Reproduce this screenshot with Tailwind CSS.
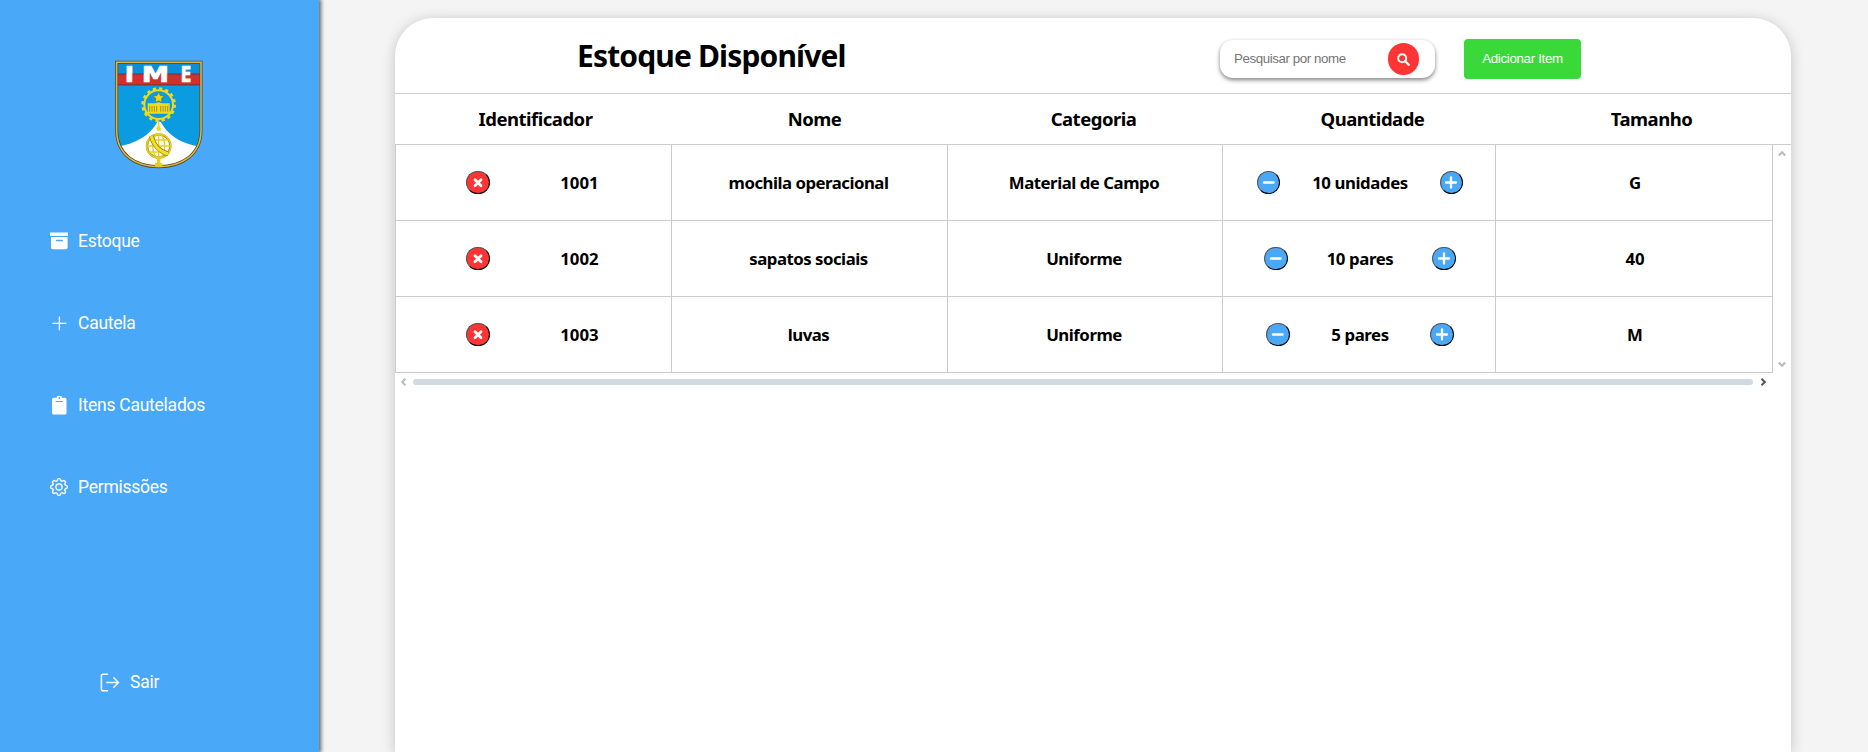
<!DOCTYPE html>
<html lang="pt-BR">
<head>
<meta charset="utf-8">
<title>Estoque</title>
<script src="https://cdn.jsdelivr.net/npm/@tailwindcss/browser@4"></script>
</head>
<body class="flex h-[752px] overflow-hidden bg-[#f4f4f4] font-['Noto_Sans',sans-serif] text-black">
<svg class="hidden">
  <symbol id="x" viewBox="0 0 24 24"><path d="M9 8.800l6 6M15 8.800l-6 6" stroke="#fff" stroke-width="2.800" stroke-linecap="round"/></symbol>
  <symbol id="minus" viewBox="0 0 24 24"><path d="M7 11.500h9.500" stroke="#fff" stroke-width="2.400" stroke-linecap="round"/></symbol>
  <symbol id="plus" viewBox="0 0 24 24"><path d="M7 11.500h10M12 6.500v10" stroke="#fff" stroke-width="2.300" stroke-linecap="round"/></symbol>
</svg>

<aside class="flex w-[319px] shrink-0 flex-col bg-[#4aa8f9] font-[Roboto,sans-serif] text-[17.500px] tracking-[-0.25px] text-white shadow-[1px_0_4px_1px_rgba(0,0,0,0.6)]">
  <svg class="mt-[50px] ml-[100px] h-[130px] w-[120px]" viewBox="0 0 360 390">
    <defs><clipPath id="shield"><path d="M50 37H303V240C303 315 245 350 176 350C107 350 50 315 50 240Z"/></clipPath></defs>
    <g clip-path="url(#shield)">
      <rect x="45" y="30" width="265" height="325" fill="#0b9be0"/>
      <rect x="45" y="30" width="265" height="43" fill="#0b8fd6"/>
      <rect x="45" y="72" width="265" height="33" fill="#d22f2f"/>
      <path d="M45 72H310M45 105H310" stroke="#333" stroke-width="2"/>
      <path d="M45 290C105 285 150 255 172 216H182C204 255 245 285 308 290V360H45Z" fill="#fff"/>
    </g>
    <path d="M50 37H303V240C303 315 245 350 176 350C107 350 50 315 50 240Z" fill="none" stroke="#514a25" stroke-width="9"/>
    <path d="M50 37H303V240C303 315 245 350 176 350C107 350 50 315 50 240Z" fill="none" stroke="#e2b53c" stroke-width="4.500"/>
    <g fill="#fff" stroke="#fff" stroke-width="2" letter-spacing="0" font-family="DejaVu Sans" font-weight="700" font-size="61">
      <text x="74" y="96" textLength="28" lengthAdjust="spacingAndGlyphs">I</text>
      <text x="125" y="96" textLength="82" lengthAdjust="spacingAndGlyphs">M</text>
      <text x="242" y="96" textLength="32" lengthAdjust="spacingAndGlyphs">E</text>
    </g>
    <g stroke="#f0d91c" fill="none">
      <circle cx="176" cy="164" r="43" stroke-width="6"/>
      <circle cx="176" cy="164" r="48" stroke-width="8" stroke-dasharray="9.500 9.350"/>
      <path d="M176 212v30" stroke-width="5"/>
      <circle cx="176" cy="236" r="5" stroke-width="4" fill="#f0d91c"/>
    </g>
    <path d="M176 127l5 10 11 1-8 8 2 11-10-5-10 5 2-11-8-8 11-1z" fill="#f0d91c" stroke="#6b6a20" stroke-width="1.500"/>
    <path d="M143 160h22l11-3 11 3h22v26h9v5h-84v-5h9z" fill="#f0d91c"/>
    <path d="M149 168v17M156 168v17M163 168v17M170 168v17M182 168v17M189 168v17M196 168v17M203 168v17" stroke="#7d7a1c" stroke-width="2"/>
    <circle cx="176" cy="288" r="35" stroke="#a8930f" stroke-width="7" fill="none"/>
    <g stroke="#e8cf1c" stroke-width="4" fill="none">
      <circle cx="176" cy="288" r="36"/><ellipse cx="176" cy="288" rx="18" ry="36"/>
      <path d="M176 252v84M140 288h72M146 270h60M146 306h60"/>
    </g>
    <path d="M154 258C160 285 180 305 205 312" stroke="#8e7d12" stroke-width="14" fill="none"/>
    <path d="M154 258C160 285 180 305 205 312" stroke="#f4df22" stroke-width="10" fill="none"/>
    <path d="M171 324h10v15h6v11h-22v-11h6z" fill="#e8cf1c"/>
  </svg>

  <nav class="mt-[20px] flex flex-col">
    <a class="flex h-[82px] items-center gap-[10px] pl-[50px]"><svg class="size-[18px]" viewBox="0 0 18 18" fill="#fff"><path d="M0 .5h18v3.400H0z"/><path fill-rule="evenodd" d="M1 4.900h16.600v10.600q0 1.800-1.800 1.800H2.800Q1 17.300 1 15.500zM6.600 7.800a.700.700 0 0 0 0 1.500h5.800a.700.700 0 0 0 0-1.500z"/></svg><span class="pt-px">Estoque</span></a>
    <a class="flex h-[82px] items-center gap-[10px] pl-[50px]"><svg class="size-[18px]" viewBox="0 0 18 18" stroke="#fff" stroke-width="1.300" stroke-linecap="round"><path d="M9.400 2.800v13M2.900 9.400h13"/></svg><span class="pt-px">Cautela</span></a>
    <a class="flex h-[82px] items-center gap-[10px] pl-[50px]"><svg class="h-[19px] w-[18px]" viewBox="0 0 18 19" fill="#fff"><path fill-rule="evenodd" d="M3.700 1.700h3.100a2.500 2.500 0 0 1 5 0h3.100q1.600 0 1.600 1.600v13.600q0 1.600-1.600 1.600H3.700q-1.600 0-1.600-1.600V3.300q0-1.600 1.600-1.600zM9.300 1.200a.8.8 0 1 0 .01 0zM5.700 4.900v1.100h7.200V4.900z"/></svg><span class="pt-px">Itens Cautelados</span></a>
    <a class="flex h-[82px] items-center gap-[10px] pl-[50px]"><svg class="size-[18px]" viewBox="0 0 16 16" fill="#fff" stroke="#fff" stroke-width=".25"><path d="M8 4.754a3.246 3.246 0 1 0 0 6.492 3.246 3.246 0 0 0 0-6.492M5.754 8a2.246 2.246 0 1 1 4.492 0 2.246 2.246 0 0 1-4.492 0"/><path d="M9.796 1.343c-.527-1.790-3.065-1.790-3.592 0l-.094.319a.873.873 0 0 1-1.255.52l-.292-.16c-1.640-.892-3.433.902-2.540 2.541l.159.292a.873.873 0 0 1-.52 1.255l-.319.094c-1.790.527-1.790 3.065 0 3.592l.319.094a.873.873 0 0 1 .52 1.255l-.16.292c-.892 1.640.901 3.434 2.541 2.540l.292-.159a.873.873 0 0 1 1.255.52l.094.319c.527 1.790 3.065 1.790 3.592 0l.094-.319a.873.873 0 0 1 1.255-.52l.292.16c1.640.893 3.434-.902 2.540-2.541l-.159-.292a.873.873 0 0 1 .52-1.255l.319-.094c1.790-.527 1.790-3.065 0-3.592l-.319-.094a.873.873 0 0 1-.52-1.255l.16-.292c.893-1.640-.902-3.433-2.541-2.540l-.292.159a.873.873 0 0 1-1.255-.52zm-2.633.283c.246-.835 1.428-.835 1.674 0l.094.319a1.873 1.873 0 0 0 2.693 1.115l.291-.16c.764-.415 1.600.42 1.184 1.185l-.159.292a1.873 1.873 0 0 0 1.116 2.692l.318.094c.835.246.835 1.428 0 1.674l-.319.094a1.873 1.873 0 0 0-1.115 2.693l.16.291c.415.764-.42 1.600-1.185 1.184l-.291-.159a1.873 1.873 0 0 0-2.693 1.116l-.094.318c-.246.835-1.428.835-1.674 0l-.094-.319a1.873 1.873 0 0 0-2.692-1.115l-.292.16c-.764.415-1.600-.42-1.184-1.185l.159-.291A1.873 1.873 0 0 0 1.945 8.930l-.319-.094c-.835-.246-.835-1.428 0-1.674l.319-.094A1.873 1.873 0 0 0 3.060 4.377l-.16-.292c-.415-.764.42-1.600 1.185-1.184l.292.159a1.873 1.873 0 0 0 2.692-1.115z"/></svg><span class="pt-px">Permissões</span></a>
  </nav>
  <a class="mt-[113px] flex h-[82px] items-center gap-[10px] pl-[100px]"><svg class="h-[19px] w-[20px]" viewBox="0 0 20 19" fill="none" stroke="#fff" stroke-width="1.500" stroke-linecap="round" stroke-linejoin="round"><path d="M7.500 1.300H3.200Q1.400 1.300 1.400 3.100v12.800q0 1.800 1.800 1.800h4.300M6.800 9.500h11.600M13.800 4.800l4.700 4.700-4.700 4.700"/></svg><span class="pt-px">Sair</span></a>
</aside>

<main class="mt-[18px] ml-[76px] flex h-[734px] w-[1396px] flex-col rounded-t-[38px] bg-white shadow-[0_2px_14px_rgba(0,0,0,0.2)]">
  <header class="flex h-[76px] shrink-0 items-start border-b border-[#ccc]">
    <h1 class="mt-[18px] ml-[182px] w-[269px] text-[30px] leading-[40px] font-bold tracking-[-0.85px] whitespace-nowrap">Estoque Disponível</h1>
    <div class="mt-[22px] ml-[374px] flex h-[38px] w-[215px] items-center rounded-[13px] bg-white pl-[14px] font-['Liberation_Sans',sans-serif] text-[13.333px] tracking-[-0.42px] text-[#757575] shadow-[0_2px_4px_0_rgba(0,0,0,0.5)]">
      <span class="w-[154px]">Pesquisar por nome</span>
      <span class="flex h-8 w-[31px] items-center justify-center rounded-full bg-[#ff3434]"><svg class="size-[13px]" viewBox="0 0 13 13" fill="none" stroke="#fff"><circle cx="5.200" cy="5.200" r="4" stroke-width="2"/><path d="M8.300 8.300l3.400 3.400" stroke-width="2.300" stroke-linecap="round"/></svg></span>
    </div>
    <button class="mt-[21px] ml-[29px] h-10 w-[117px] rounded-[4px] bg-[#3ad93a] font-['Liberation_Sans',sans-serif] text-[13.333px] tracking-[-0.32px] text-white">Adicionar Item</button>
  </header>
  <div class="grid h-[50px] shrink-0 grid-cols-5 items-center pl-px text-center text-[18.500px] font-bold tracking-[-0.5px]">
    <div>Identificador</div><div>Nome</div><div>Categoria</div><div>Quantidade</div><div>Tamanho</div>
  </div>
  <div class="flex h-[229px] shrink-0 border-t border-[#ccc]">
    <div class="grid w-[1378px] grid-cols-[276px_276px_275px_273px_277px] grid-rows-[76px_76px_76px] border-l border-[#ccc] text-[16.800px] font-bold" id="rows"></div>
    <div class="flex flex-1 flex-col items-center justify-between pr-px pt-[5px] pb-[5px]">
      <svg class="h-[7px] w-[8px]" viewBox="0 0 8 7"><path d="M.8 5.500L4 2.200l3.200 3.300" fill="none" stroke="#bbb" stroke-width="2"/></svg>
      <svg class="h-[7px] w-[8px]" viewBox="0 0 8 7"><path d="M.8 1.500L4 4.800l3.200-3.300" fill="none" stroke="#bbb" stroke-width="2"/></svg>
    </div>
  </div>
  <div class="flex h-[18px] shrink-0 items-center pl-[5px]">
    <svg class="h-2 w-[7px]" viewBox="0 0 7 8"><path d="M5.500.8L2.200 4l3.300 3.200" fill="none" stroke="#bbb" stroke-width="2"/></svg>
    <div class="ml-[6px] h-[6px] w-[1340px] rounded-full bg-[#cfdae2]"></div>
    <svg class="ml-[7px] h-2 w-[7px]" viewBox="0 0 7 8"><path d="M1.500.8L4.800 4 1.500 7.200" fill="none" stroke="#555" stroke-width="2"/></svg>
  </div>
</main>

<script>
const items = [
  ['1001', 'mochila operacional', 'Material de Campo', '10 unidades', 'G'],
  ['1002', 'sapatos sociais', 'Uniforme', '10 pares', '40'],
  ['1003', 'luvas', 'Uniforme', '5 pares', 'M'],
];
const cell = 'flex items-center justify-evenly border-r border-b border-[#ccc] pt-px';
const btn = (icon, color) => `<button class="mt-[-1px] flex h-[23px] w-[23.500px] items-center justify-center rounded-full border border-black [border-style:outset] ${color}"><svg class="size-[24px] shrink-0"><use href="#${icon}"/></svg></button>`;
document.getElementById('rows').innerHTML = items.map(([id, nome, cat, qtd, tam]) => `
  <div class="${cell} pr-[2px]">${btn('x', 'bg-[#ff3434]')}<span>${id}</span></div>
  <div class="${cell} pr-[2px]"><span class="tracking-[-0.5px]">${nome}</span></div>
  <div class="${cell} pr-[2px]"><span class="tracking-[-0.47px]">${cat}</span></div>
  <div class="${cell} pl-[2px]">${btn('minus', 'bg-[#4aa8f9]')}<span class="tracking-[-0.4px]">${qtd}</span>${btn('plus', 'bg-[#4aa8f9]')}</div>
  <div class="${cell} pl-[2px]"><span>${tam}</span></div>`).join('');
</script>
</body>
</html>
